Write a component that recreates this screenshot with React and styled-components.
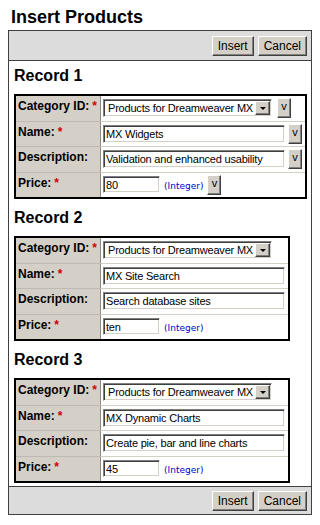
import React from "react";
import styled, { createGlobalStyle } from "styled-components";

const GlobalStyle = createGlobalStyle`
  body {
    margin: 0;
    background: #fff;
    font-family: "Liberation Sans", Arial, sans-serif;
    color: #000;
  }
`;

const Page = styled.div`
  padding: 0 9px 0 8px;
`;

const Title = styled.h1`
  margin: 0;
  padding: 7px 0 2px 3px;
  font-size: 18px;
  line-height: 21px;
  font-weight: bold;
`;

const Panel = styled.div`
  border: 1px solid #404040;
  width: 302px;
`;

const Toolbar = styled.div`
  background: #dcdcdc;
  display: flex;
  justify-content: flex-end;
  gap: 4px;
  padding: ${(p) => (p.bottom ? "4px 4px 3px" : "5px 4px 4px")};
  border-top: ${(p) => (p.bottom ? "1px solid #404040" : "none")};
  border-bottom: ${(p) => (p.bottom ? "none" : "1px solid #404040")};
`;

const Button = styled.button`
  height: 20px;
  padding: 0 5px;
  background: #d4d0c8;
  font-family: "Liberation Sans", Arial, sans-serif;
  font-size: 12px;
  color: #000;
  border: 1px solid;
  border-color: #fff #404040 #404040 #fff;
  box-shadow: inset -1px -1px #808080;
  border-radius: 0;
`;

const Content = styled.div`
  padding: 0 5px 3px;
`;

const RecordTitle = styled.h2`
  margin: ${(p) => (p.first ? "6px 0 9px" : "10px 0 9px")};
  font-size: 16px;
  line-height: 18px;
  font-weight: bold;
`;

const Table = styled.table`
  border-collapse: collapse;
  border: 2px solid #000;
`;

const Label = styled.td`
  background: #d4d0c8;
  border: 1px solid #bdbab3;
  border-right-color: #8c8a85;
  width: 78px;
  padding: 3px 3px 2px 2px;
  vertical-align: top;
  font-size: 12px;
  line-height: 14px;
  font-weight: bold;
  white-space: nowrap;
`;

const Star = styled.span`
  color: #d00000;
  margin-left: 3px;
`;

const Value = styled.td`
  border: 1px solid #d4d0c8;
  padding: 2px 3px 2px 2px;
  vertical-align: middle;
`;

const Field = styled.div`
  display: flex;
  align-items: center;
  gap: ${(p) => p.gap || 3}px;
  height: 20.5px;
`;

const Input = styled.div`
  box-sizing: border-box;
  width: ${(p) => p.width}px;
  height: ${(p) => p.height || 18}px;
  background: #fff;
  border: 1px solid;
  border-color: #808080 #fff #fff #808080;
  box-shadow: inset 1px 1px #404040, inset -1px -1px #d4d0c8;
  padding: 0 0 0 2px;
  font-size: 11px;
  letter-spacing: -0.2px;
  line-height: 16px;
  white-space: nowrap;
  overflow: hidden;
`;

const Select = styled(Input)`
  display: flex;
  align-items: center;
  padding: 1px 1px 1px 4px;
`;

const SelectText = styled.span`
  flex: 1;
  overflow: hidden;
`;

const Arrow = styled.span`
  box-sizing: border-box;
  width: 15px;
  height: 14px;
  background: #d4d0c8;
  border: 1px solid;
  border-color: #fff #404040 #404040 #fff;
  box-shadow: inset -1px -1px #808080;
  display: flex;
  align-items: center;
  justify-content: center;
  &::after {
    content: "";
    border-left: 3px solid transparent;
    border-right: 3px solid transparent;
    border-top: 3px solid #000;
    margin-top: 1px;
  }
`;

const VButton = styled.span`
  box-sizing: border-box;
  width: 14px;
  height: 20px;
  background: #d4d0c8;
  border: 1px solid;
  border-color: #fff #404040 #404040 #fff;
  box-shadow: inset -1px -1px #808080;
  font-size: 11px;
  line-height: 15px;
  text-align: center;
`;

const Hint = styled.span`
  color: #0000cc;
  font-family: "DejaVu Sans", Verdana, sans-serif;
  font-size: 9px;
  margin-top: 3px;
`;

const records = [
  {
    name: "MX Widgets",
    desc: "Validation and enhanced usability",
    price: "80",
    tools: true,
  },
  {
    name: "MX Site Search",
    desc: "Search database sites",
    price: "ten",
    tools: false,
  },
  {
    name: "MX Dynamic Charts",
    desc: "Create pie, bar and line charts",
    price: "45",
    tools: false,
  },
];

const Record = ({ rec, index }) => (
  <>
    <RecordTitle first={index === 0}>Record {index + 1}</RecordTitle>
    <Table>
      <tbody>
        <tr>
          <Label>
            Category ID:<Star>*</Star>
          </Label>
          <Value>
            <Field gap={5}>
              <Select width={169}>
                <SelectText>Products for Dreamweaver MX</SelectText>
                <Arrow />
              </Select>
              {rec.tools && <VButton>v</VButton>}
            </Field>
          </Value>
        </tr>
        <tr>
          <Label>
            Name:<Star>*</Star>
          </Label>
          <Value>
            <Field>
              <Input width={182}>{rec.name}</Input>
              {rec.tools && <VButton>v</VButton>}
            </Field>
          </Value>
        </tr>
        <tr>
          <Label>Description:</Label>
          <Value>
            <Field>
              <Input width={182}>{rec.desc}</Input>
              {rec.tools && <VButton>v</VButton>}
            </Field>
          </Value>
        </tr>
        <tr>
          <Label>
            Price:<Star>*</Star>
          </Label>
          <Value>
            <Field gap={4}>
              <Input width={57} height={17}>
                {rec.price}
              </Input>
              <Hint>(Integer)</Hint>
              {rec.tools && <VButton>v</VButton>}
            </Field>
          </Value>
        </tr>
      </tbody>
    </Table>
  </>
);

export default function App() {
  return (
    <Page>
      <GlobalStyle />
      <Title>Insert Products</Title>
      <Panel>
        <Toolbar>
          <Button>Insert</Button>
          <Button>Cancel</Button>
        </Toolbar>
        <Content>
          {records.map((rec, i) => (
            <Record key={i} rec={rec} index={i} />
          ))}
        </Content>
        <Toolbar bottom>
          <Button>Insert</Button>
          <Button>Cancel</Button>
        </Toolbar>
      </Panel>
    </Page>
  );
}
